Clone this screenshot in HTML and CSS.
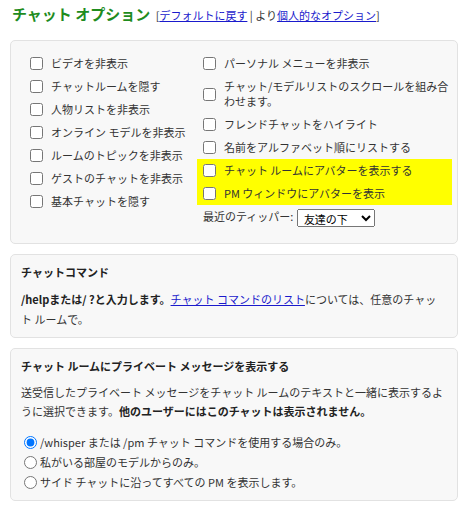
FILE: index.html
```html
<!DOCTYPE html>
<html lang="ja">
<head>
  <meta charset="UTF-8" />
  <meta name="viewport" content="width=device-width, initial-scale=1.0"/>
  <title>チャット オプション</title>
  <link rel="stylesheet" href="styles.css">
</head>
<body>

  <h1 class="page-title">
    チャット オプション
    <span class="title-links">[<a href="#">デフォルトに戻す</a> | より<a href="#">個人的なオプション</a>]</span>
  </h1>

  <!-- Display toggles -->
  <div class="panel options">
    <ul class="opt-col">
      <li><label><input type="checkbox" />ビデオを非表示</label></li>
      <li><label><input type="checkbox" />チャットルームを隠す</label></li>
      <li><label><input type="checkbox" />人物リストを非表示</label></li>
      <li><label><input type="checkbox" />オンライン モデルを非表示</label></li>
      <li><label><input type="checkbox" />ルームのトピックを非表示</label></li>
      <li><label><input type="checkbox" />ゲストのチャットを非表示</label></li>
      <li><label><input type="checkbox" />基本チャットを隠す</label></li>
    </ul>
    <ul class="opt-col">
      <li><label><input type="checkbox" />パーソナル メニューを非表示</label></li>
      <li><label><input type="checkbox" />チャット/モデルリストのスクロールを組み合わせます。</label></li>
      <li><label><input type="checkbox" />フレンドチャットをハイライト</label></li>
      <li><label><input type="checkbox" />名前をアルファベット順にリストする</label></li>
      <li class="new"><label><input type="checkbox" />チャット ルームにアバターを表示する</label></li>
      <li class="new"><label><input type="checkbox" />PM ウィンドウにアバターを表示</label></li>
      <li class="tipper">
        最近のティッパー:
        <select>
          <option>友達の下</option>
          <option>上</option>
        </select>
      </li>
    </ul>
  </div>

  <div class="panel">
    <h3 class="panel-title">チャットコマンド</h3>
    <p class="panel-text"><strong>/helpまたは/ ?と入力します。</strong><a href="#">チャット コマンドのリスト</a>については、任意のチャット ルームで。</p>
  </div>

  <div class="panel">
    <h3 class="panel-title">チャット ルームにプライベート メッセージを表示する</h3>
    <p class="panel-text pm-text">送受信したプライベート メッセージをチャット ルームのテキストと一緒に表示するように選択できます。<strong class="note">他のユーザーにはこのチャットは表示されません。</strong></p>
    <div class="radios">
      <label><input type="radio" name="pm" checked />/whisper または /pm チャット コマンドを使用する場合のみ。</label>
      <label><input type="radio" name="pm" />私がいる部屋のモデルからのみ。</label>
      <label><input type="radio" name="pm" />サイド チャットに沿ってすべての PM を表示します。</label>
    </div>
  </div>

</body>
</html>
```

FILE: styles.css
```css
body {
  font-family: "Noto Sans CJK JP", "Noto Sans", sans-serif;
  font-size: 11px;
  color: #333;
  background: #fff;
  margin: 0;
  padding: 3px 7px 0 10px;
}

a {
  color: #1a1acc;
}

.page-title {
  margin: 0 0 14px 2px;
  font-size: 15px;
  line-height: 22px;
  color: #1e8c1e;
}

.title-links {
  font-size: 11px;
  font-weight: normal;
  color: #333;
  margin-left: 2px;
}

.panel {
  background: #f8f8f8;
  border: 1px solid #e2e2e2;
  border-radius: 5px;
  padding: 8px 10px 8px 10px;
  margin-bottom: 10px;
}

/* two columns of checkboxes */
.options {
  display: grid;
  grid-template-columns: 173px 1fr;
  padding: 11px 5px 12px 13px;
}

.opt-col {
  list-style: none;
  margin: 0;
  padding: 0;
}

.opt-col li {
  padding: 4px 0 4px 6px;
  line-height: 15px;
}

.opt-col label {
  display: flex;
  align-items: center;
}

.opt-col input {
  flex: none;
  width: 13px;
  height: 13px;
  margin: 0 8px 0 0;
}

.opt-col li.new {
  background: #ffff00;
}

.tipper select {
  font-family: inherit;
  font-size: 11px;
  width: 78px;
  height: 18px;
  padding: 0 2px;
  margin-left: 1px;
  vertical-align: middle;
}

.panel-title {
  margin: 0 0 8px;
  font-size: 11px;
  line-height: 18px;
  color: #222;
}

.panel-text {
  margin: 0;
  line-height: 20px;
}

.pm-text {
  line-height: 19px;
}

.panel-text strong {
  color: #222;
}

.radios {
  margin-top: 11px;
  display: flex;
  flex-direction: column;
}

.radios label {
  display: flex;
  align-items: center;
  line-height: 20px;
}

.radios input {
  width: 13px;
  height: 13px;
  margin: 0 3px 0 3px;
}
```
